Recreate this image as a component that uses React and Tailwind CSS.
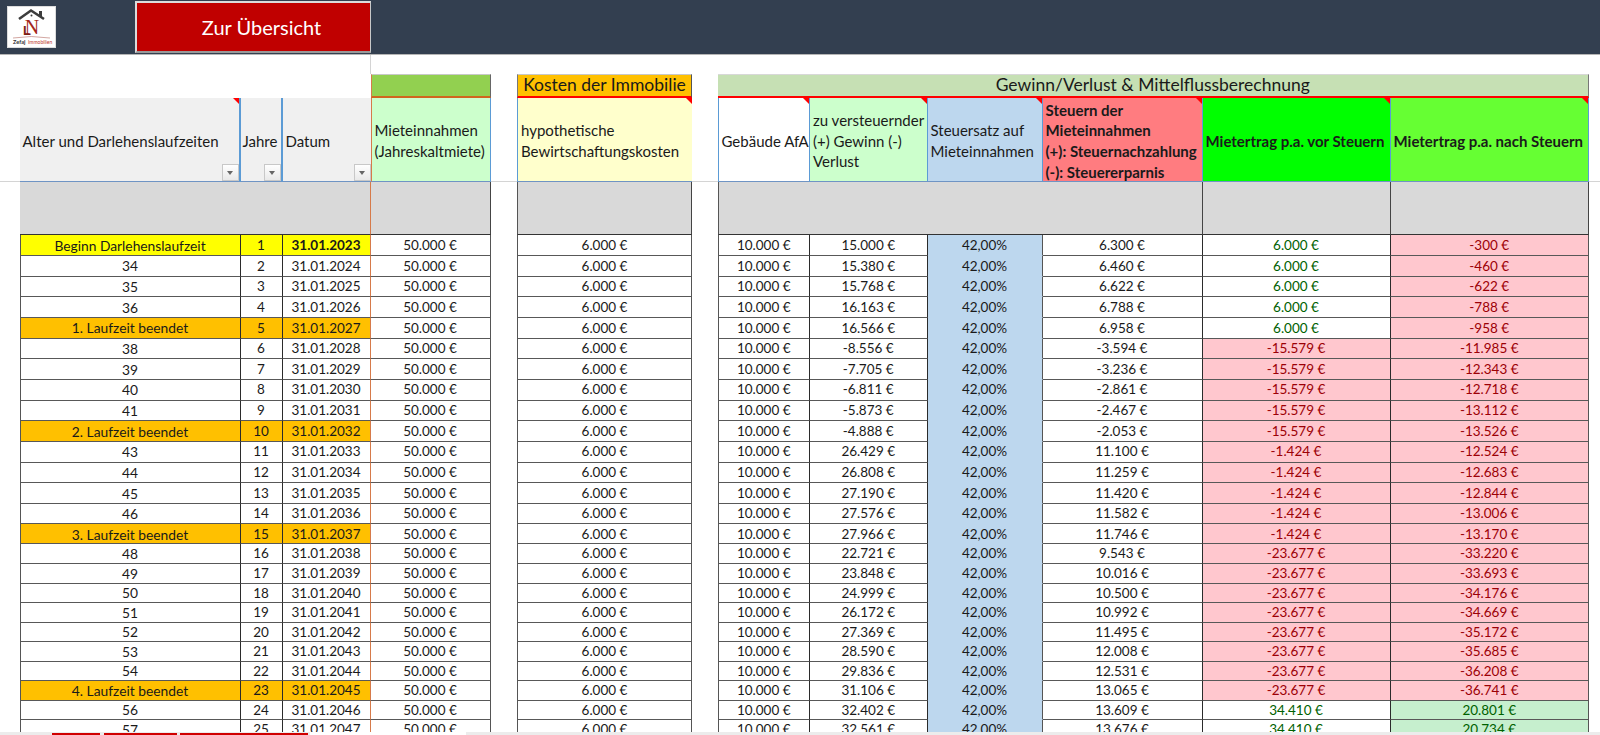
const rowLabels = [
  'Beginn Darlehenslaufzeit', '34', '35', '36', '1. Laufzeit beendet', '38', '39', '40', '41',
  '2. Laufzeit beendet', '43', '44', '45', '46', '3. Laufzeit beendet', '48', '49', '50', '51',
  '52', '53', '54', '4. Laufzeit beendet', '56', '57',
]
const gewinn = ['15.000', '15.380', '15.768', '16.163', '16.566', '-8.556', '-7.705', '-6.811', '-5.873', '-4.888', '26.429', '26.808', '27.190', '27.576', '27.966', '22.721', '23.848', '24.999', '26.172', '27.369', '28.590', '29.836', '31.106', '32.402', '32.561']
const steuern = ['6.300', '6.460', '6.622', '6.788', '6.958', '-3.594', '-3.236', '-2.861', '-2.467', '-2.053', '11.100', '11.259', '11.420', '11.582', '11.746', '9.543', '10.016', '10.500', '10.992', '11.495', '12.008', '12.531', '13.065', '13.609', '13.676']
const vorSteuern = ['6.000', '6.000', '6.000', '6.000', '6.000', '-15.579', '-15.579', '-15.579', '-15.579', '-15.579', '-1.424', '-1.424', '-1.424', '-1.424', '-1.424', '-23.677', '-23.677', '-23.677', '-23.677', '-23.677', '-23.677', '-23.677', '-23.677', '34.410', '34.410']
const nachSteuern = ['-300', '-460', '-622', '-788', '-958', '-11.985', '-12.343', '-12.718', '-13.112', '-13.526', '-12.524', '-12.683', '-12.844', '-13.006', '-13.170', '-33.220', '-33.693', '-34.176', '-34.669', '-35.172', '-35.685', '-36.208', '-36.741', '20.801', '20.734']

const rows = rowLabels.map((label, i) => ({
  label,
  year: i + 1,
  date: `31.01.${2023 + i}`,
  gewinn: gewinn[i],
  steuern: steuern[i],
  vor: vorSteuern[i],
  nach: nachSteuern[i],
}))

const cell = 'flex items-center justify-center pt-px leading-none border-b border-r border-b-[#585858] border-r-[#2b2b2b] whitespace-nowrap overflow-hidden'
const greyCell = 'bg-[#d9d9d9] border-r border-r-[#444] border-b border-b-[#333]'
const headText = 'flex items-center pl-[3px] pt-[3px] border-b border-b-[#6f94c4]'
const gapLine = 'border-b border-b-[#d4d4d4]'

function Corner() {
  return <span className="absolute right-0 top-0 w-0 h-0 border-l-[6px] border-l-transparent border-t-[6px] border-t-[#ff0000]" />
}

function FilterButton() {
  return (
    <span className="absolute right-0 bottom-0 w-[17px] h-[17px] bg-linear-to-b from-white to-[#e9e9e9] border border-[#c8c8c8] flex items-center justify-center">
      <span className="w-0 h-0 border-x-[3.5px] border-x-transparent border-t-[4px] border-t-[#666]" />
    </span>
  )
}

function Logo() {
  return (
    <div className="ml-[7px] w-[49px] h-[42px] bg-white border border-[#ddd] overflow-hidden">
      <svg width="47" height="40" viewBox="0 0 47 40">
        <path d="M11 12 L23 3.5 L36 12" fill="none" stroke="#3d3d3d" strokeWidth="2.6" />
        <path d="M31 4 h3 v6 h-3 z" fill="#3d3d3d" />
        <circle cx="23.5" cy="8.5" r="1" fill="#3d3d3d" />
        <text x="24" y="27" textAnchor="middle" fontSize="20" fill="#a5281b" fontFamily="Liberation Serif, serif">N</text>
        <text x="15" y="28" fontSize="13" fontWeight="700" fill="#7d1d14" fontFamily="Liberation Sans, sans-serif">L</text>
        <path d="M5 31 Q23 28 42 31" fill="none" stroke="#d3a7a2" strokeWidth="1" />
        <text x="5" y="37" fontSize="5.6" fontWeight="700" fill="#333" fontFamily="Lato, sans-serif">Zefaj</text>
        <text x="20" y="37" fontSize="5" fill="#c0392b" fontFamily="Lato, sans-serif">Immobilien</text>
      </svg>
    </div>
  )
}

export default function App() {
  return (
    <div className="w-[1600px] h-[735px] overflow-hidden flex flex-col bg-white text-[#1a1a1a] text-[13.5px] font-['Lato',sans-serif]">
      <div className="h-[55px] shrink-0 bg-[#333f50] border-b border-b-[#b5b5b5] flex items-center">
        <Logo />
        <div className="ml-[79px] w-[236px] h-[52px] bg-[#c00000] border-t-2 border-l-2 border-r border-b-2 border-t-[#dcdcdc] border-l-[#dcdcdc] border-r-[#c8c8c8] border-b-[#9a9a9a] flex items-center justify-center pl-[16px] text-white text-[20px]">
          Zur Übersicht
        </div>
      </div>

      <div className="flex-1 overflow-hidden">
        <div className="grid grid-cols-[19.5px_221px_42px_88px_120px_26.5px_175px_25.5px_92.5px_117.5px_115px_160px_188px_198.5px_1fr] grid-rows-[19px_24px_84px_53.3px_repeat(14,20.67px)_20px_repeat(10,19.53px)]">
          {/* spacer above the bands */}
          <div className="col-span-4 border-r border-r-[#d4d4d4]" />
          <div className="col-span-11" />

          {/* band row */}
          <div className="col-span-4" />
          <div className="bg-[#92d050] border-t border-t-[#c8c8c8] border-r border-r-[#666] border-b-2 border-b-[#d0651e] border-l border-l-[#d67a4a]" />
          <div />
          <div className="bg-[#ffc000] border-t border-t-[#c8c8c8] border-l border-l-[#777] border-r border-r-[#555] border-b-2 border-b-[#ff0000] flex items-center justify-center text-[17.5px]">
            Kosten der Immobilie
          </div>
          <div />
          <div className="col-span-6 bg-[#c6e0b4] border-t border-t-[#d8d8d8] border-r border-r-[#777] border-b-2 border-b-[#ff0000] flex items-center justify-center text-[17.5px]">
            Gewinn/Verlust &amp; Mittelflussberechnung
          </div>
          <div />

          {/* header row */}
          <div className={gapLine} />
          <div className={`relative bg-[#f0f0f0] border-r-2 border-r-[#5b9bd5] ${headText} text-[15px]`}>
            Alter und Darlehenslaufzeiten
            <Corner />
            <FilterButton />
          </div>
          <div className={`relative bg-[#f0f0f0] border-r-2 border-r-[#5b9bd5] ${headText} !pl-[2px] text-[15px]`}>
            Jahre
            <FilterButton />
          </div>
          <div className={`relative bg-[#f0f0f0] ${headText} text-[15px]`}>
            Datum
            <FilterButton />
          </div>
          <div className={`bg-[#ccffcc] border-l border-l-[#d67a4a] border-r border-r-[#5b9bd5] ${headText} text-[15px] leading-[20.67px]`}>
            <div>Mieteinnahmen<br />(Jahreskaltmiete)</div>
          </div>
          <div className={gapLine} />
          <div className={`relative bg-[#ffffcc] border-l border-l-[#5b9bd5] ${headText} text-[15px] leading-[20.67px]`}>
            <div>hypothetische<br />Bewirtschaftungskosten</div>
            <Corner />
          </div>
          <div className={gapLine} />
          <div className={`relative bg-white border-l border-l-[#5b9bd5] border-r border-r-[#5b9bd5] ${headText} text-[15px]`}>
            Gebäude AfA
            <Corner />
          </div>
          <div className={`relative bg-[#ccffcc] border-r border-r-[#5b9bd5] ${headText} text-[15px] leading-[20.67px]`}>
            <div>zu versteuernder<br />(+) Gewinn (-)<br />Verlust</div>
            <Corner />
          </div>
          <div className={`relative bg-[#bdd7ee] border-r border-r-[#5b9bd5] ${headText} text-[15px] leading-[20.67px]`}>
            <div>Steuersatz auf<br />Mieteinnahmen</div>
            <Corner />
          </div>
          <div className={`relative bg-[#ff7c80] border-r border-r-[#5b9bd5] ${headText} text-[15px] leading-[20.67px] font-bold whitespace-nowrap`}>
            <div>Steuern der<br />Mieteinnahmen<br />(+): Steuernachzahlung<br />(-): Steuererparnis</div>
            <Corner />
          </div>
          <div className={`relative bg-[#00ff00] border-r border-r-[#5b9bd5] ${headText} text-[15px] font-bold whitespace-nowrap`}>
            Mietertrag p.a. vor Steuern
            <Corner />
          </div>
          <div className={`relative bg-[#66ff33] border-r border-r-[#5b9bd5] ${headText} text-[15px] font-bold whitespace-nowrap`}>
            Mietertrag p.a. nach Steuern
            <Corner />
          </div>
          <div className={gapLine} />

          {/* grey spacer row */}
          <div />
          <div className="col-span-3 bg-[#d9d9d9] border-b border-b-[#333] border-r border-r-[#d67a4a]" />
          <div className={greyCell} />
          <div />
          <div className={greyCell + ' border-l border-l-[#555]'} />
          <div />
          <div className="col-span-4 bg-[#d9d9d9] border-l border-l-[#555] border-r border-r-[#444] border-b border-b-[#333]" />
          <div className={greyCell} />
          <div className={greyCell} />
          <div />

          {/* data rows */}
          {rows.map((row, i) => {
            const isStart = i === 0
            const isEnd = row.label.includes('beendet')
            const rowBg = isStart ? 'bg-[#ffff00]' : isEnd ? 'bg-[#ffc000]' : 'bg-white'
            const vorNeg = row.vor.startsWith('-')
            const nachNeg = row.nach.startsWith('-')
            return [
              <div key={`m${i}`} />,
              <div key={`a${i}`} className={`${cell} ${rowBg} border-l border-l-[#555] text-[13.8px]`}>{row.label}</div>,
              <div key={`b${i}`} className={`${cell} ${rowBg}`}>{row.year}</div>,
              <div key={`c${i}`} className={`${cell} ${rowBg} border-r-[#d67a4a] ${isStart ? 'font-bold' : ''}`}>{row.date}</div>,
              <div key={`d${i}`} className={`${cell} border-r-[#555]`}>50.000 €</div>,
              <div key={`g1${i}`} />,
              <div key={`e${i}`} className={`${cell} border-l border-l-[#555] border-r-[#555]`}>6.000 €</div>,
              <div key={`g2${i}`} />,
              <div key={`f${i}`} className={`${cell} border-l border-l-[#555]`}>10.000 €</div>,
              <div key={`g${i}`} className={cell}>{row.gewinn} €</div>,
              <div key={`h${i}`} className={`${cell} bg-[#bdd7ee] border-b-[#bdd7ee] border-r-[#555]`}>42,00%</div>,
              <div key={`j${i}`} className={cell}>{row.steuern} €</div>,
              <div key={`k${i}`} className={`${cell} ${vorNeg ? 'bg-[#ffc7ce] text-[#9c0006]' : 'text-[#006100]'}`}>{row.vor} €</div>,
              <div key={`l${i}`} className={`${cell} border-r-[#555] ${nachNeg ? 'bg-[#ffc7ce] text-[#9c0006]' : 'bg-[#c6efce] text-[#006100]'}`}>{row.nach} €</div>,
              <div key={`n${i}`} />,
            ]
          })}
        </div>
      </div>

      <div className="h-[3px] shrink-0 bg-[#ececec] flex items-end">
        <div className="ml-[52px] w-[48px] h-[2px] bg-[#d00000]" />
        <div className="ml-[4px] w-[73px] h-[2px] bg-[#d00000]" />
        <div className="ml-[3px] w-[128px] h-[2px] bg-[#d00000]" />
        <div className="ml-[2px] w-[156px] h-[3px] bg-white" />
      </div>
    </div>
  )
}
